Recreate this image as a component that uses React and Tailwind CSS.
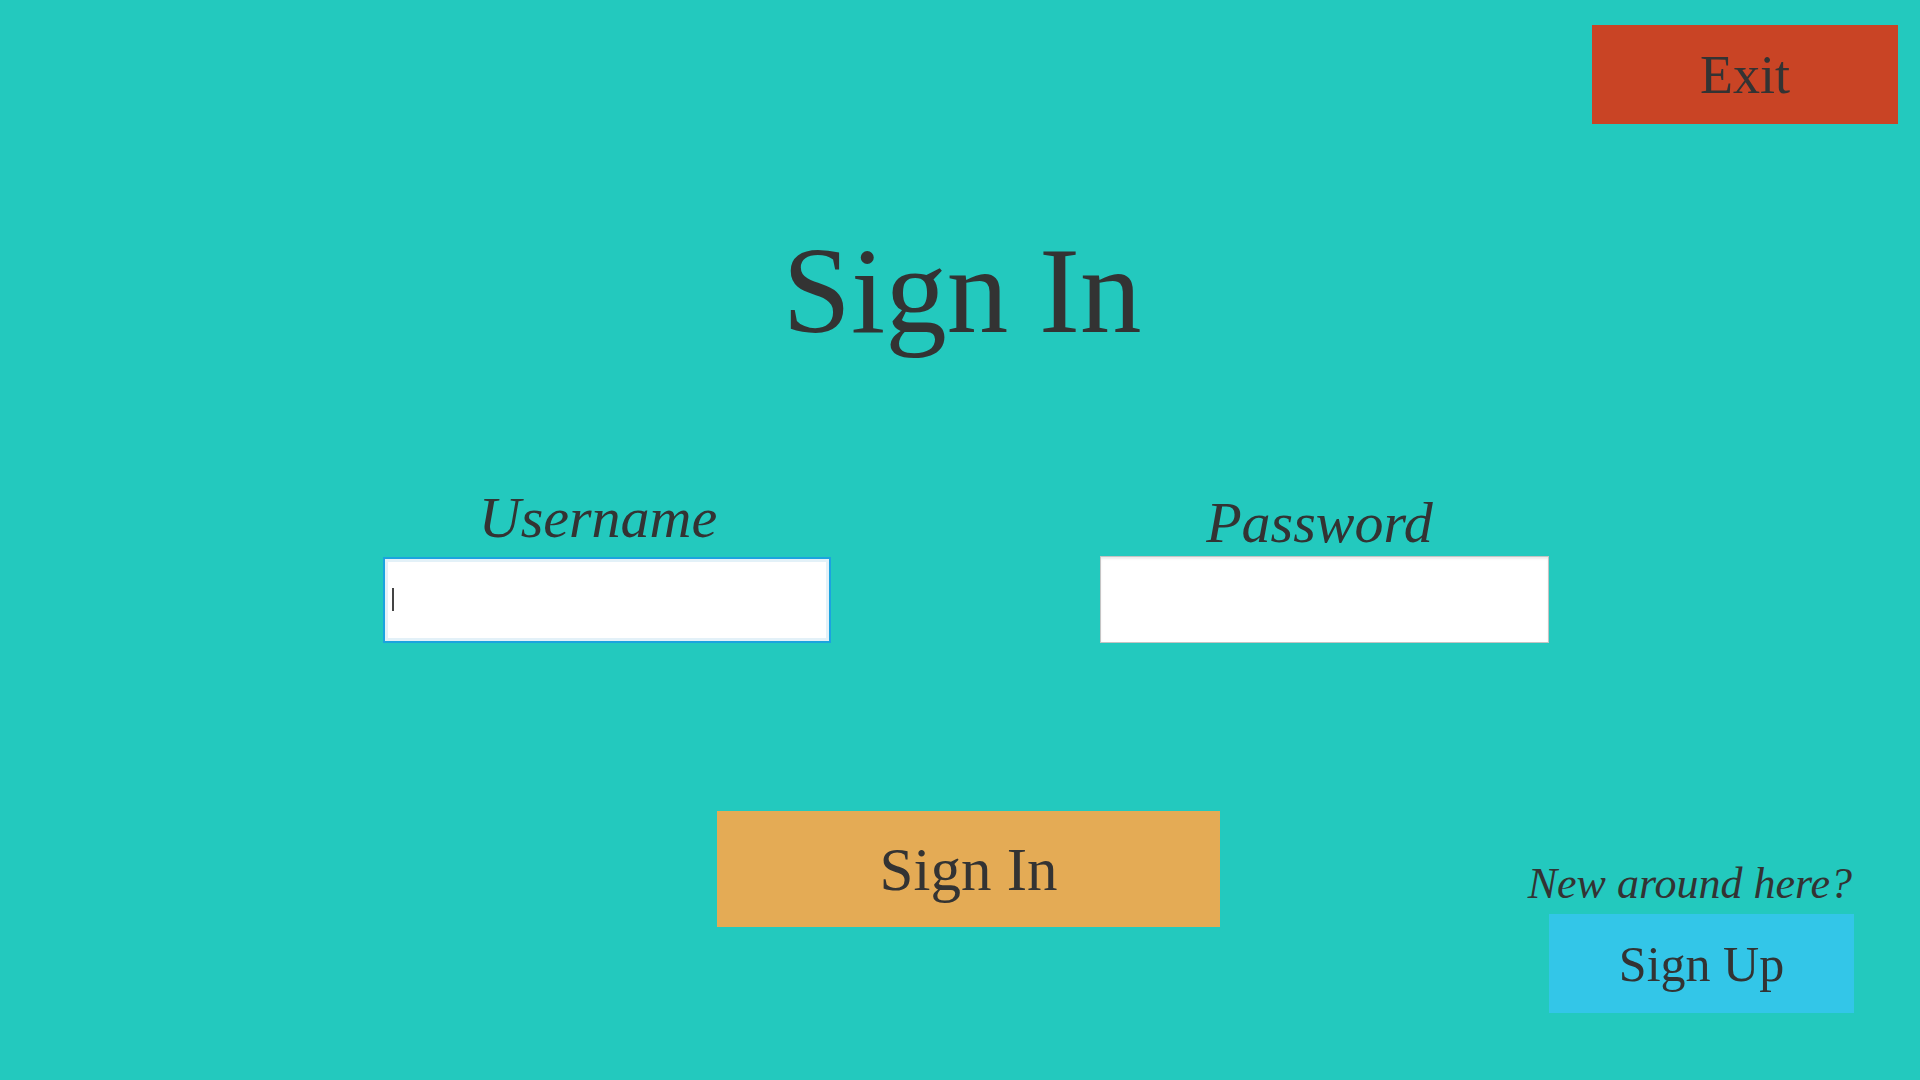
import React, { useState } from 'react';

const SignIn = () => {
    const [form, setForm] = useState({ username: '', password: '' });

    return (
        <div className="w-full h-[1080px] bg-[#23c9be] text-[#333333] font-['Liberation_Serif',serif] flex flex-col overflow-hidden">
            {/* top bar */}
            <div className="flex justify-end pt-[25px] pr-[22px]">
                <button className="w-[306px] h-[99px] bg-[#c94425] text-[54px] leading-none flex items-center justify-center">Exit</button>
            </div>

            <h1 className="mt-[105px] text-center text-[123px] leading-none pl-[4px]">Sign In</h1>

            {/* fields */}
            <div className="mt-[137px] flex justify-center gap-[269px] pl-[12px]">
                <div className="flex flex-col w-[448px]">
                    <label className="text-center italic text-[58px] leading-none pr-[18px] mb-[10px]">Username</label>
                    <div className="relative">
                        <input type="text" value={form.username} onChange={e => setForm({ ...form, username: e.target.value })} className="w-full h-[86px] bg-white border-2 border-[#1ba3df] shadow-[inset_0_0_0_3px_#e3f1f8] outline-none caret-transparent px-3" />
                        <span className="absolute left-[9px] top-[31px] w-[1.5px] h-[23px] bg-[#444]" />
                    </div>
                </div>
                <div className="flex flex-col w-[449px]">
                    <label className="text-center italic text-[58px] leading-none pr-[10px] mt-[5px] mb-[4px]">Password</label>
                    <input type="password" value={form.password} onChange={e => setForm({ ...form, password: e.target.value })} className="w-full h-[87px] bg-white border border-[#c4c4c4] shadow-[inset_0_2px_2px_#ececec] outline-none px-3" />
                </div>
            </div>

            {/* actions */}
            <div className="mt-[168px] grid grid-cols-[1fr_auto_1fr]">
                <div />
                <button className="ml-[17px] w-[503px] h-[116px] bg-[#e4ab55] text-[61px] leading-none flex items-center justify-center">Sign In</button>
                <div className="flex justify-end pr-[66px]">
                    <div className="mt-[51px] flex flex-col items-end">
                        <p className="italic text-[44px] leading-none pr-[2px] mb-[8px]">New around here?</p>
                        <button className="w-[305px] h-[99px] bg-[#33c6e8] text-[50px] leading-none flex items-center justify-center">Sign Up</button>
                    </div>
                </div>
            </div>
        </div>
    );
};

export default function App() {
    return <SignIn />;
}
